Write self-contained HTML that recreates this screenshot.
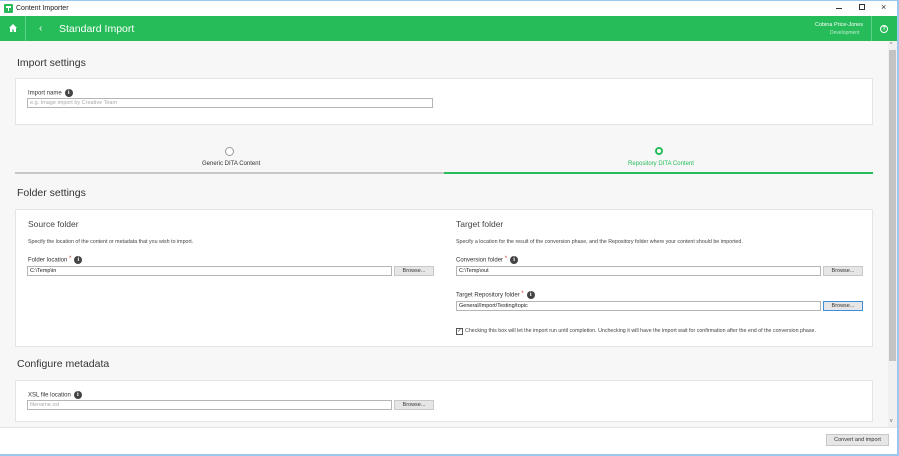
<!DOCTYPE html>
<html><head><meta charset="utf-8"><style>
*{box-sizing:border-box;margin:0;padding:0}
body{width:899px;height:456px;overflow:hidden;font-family:"Liberation Sans",sans-serif;background:#f7f7f7;position:relative}
.a{position:absolute}
.t{position:absolute;white-space:nowrap;color:#333}
.panel{position:absolute;background:#fff;border:1px solid #e4e4e4;left:15px;width:858px}
.inp{position:absolute;height:10px;border:1px solid #b5b5b5;background:#fff;font-size:5.5px;line-height:8px;padding-left:2px;color:#222}
.br{position:absolute;height:10px;width:40px;border:1px solid #c8c8c8;background:#e6e6e6;font-size:5.5px;line-height:8px;text-align:center;color:#333}
.lbl{font-size:6px;color:#333}
.i{display:inline-block;width:8px;height:8px;border-radius:50%;background:#444;color:#fff;font-size:6px;line-height:8px;text-align:center;font-weight:bold;vertical-align:middle;margin-left:3px;font-family:"Liberation Serif",serif}
.req{color:#d33;font-size:6px;vertical-align:top}
.h{font-size:10.5px;color:#333}
.sh{font-size:8.5px;color:#444}
.d{font-size:5.3px;color:#444}
</style></head><body>
<div class="a" style="left:0;top:0;width:899px;height:16px;background:#fff;border-top:1px solid #9cc8ee"></div>
<div class="a" style="left:4px;top:4px;width:9px;height:9px;background:#27b95a;border-radius:1px"></div>
<div class="a" style="left:6px;top:6px;width:5px;height:2px;background:#fff"></div>
<div class="a" style="left:8px;top:6px;width:1px;height:5px;background:#fff"></div>
<div class="t" style="left:16px;top:5px;font-size:7px;color:#222">Content Importer</div>
<div class="a" style="left:836px;top:8px;width:6px;height:1px;background:#333"></div>
<div class="a" style="left:859px;top:4px;width:6px;height:6px;border:1px solid #333"></div>
<div class="t" style="left:881px;top:2px;font-size:9px;color:#333">×</div>
<div class="a" style="left:0;top:16px;width:897px;height:25px;background:#26bc59"></div>
<div class="a" style="left:25px;top:16px;width:1px;height:25px;background:#5fd08a"></div>
<div class="a" style="left:871px;top:16px;width:1px;height:25px;background:#5fd08a"></div>
<svg class="a" style="left:9px;top:24px" width="8" height="8" viewBox="0 0 8 8"><path d="M4 0L0 4h1v4h2.3V5.5h1.4V8H7V4h1z" fill="#fff"/></svg>
<div class="t" style="left:39px;top:23px;font-size:10px;color:#fff">‹</div>
<div class="t" style="left:59px;top:23px;font-size:10.5px;color:#fff">Standard Import</div>
<div class="t" style="left:815px;top:22px;font-size:5.5px;color:#fff">Cobina Price-Jones</div>
<div class="t" style="left:830px;top:30px;font-size:5px;color:#bfeccf">Development</div>
<div class="a" style="left:880px;top:25px;width:8px;height:8px;border:1px solid #fff;border-radius:50%;color:#fff;font-size:5.5px;line-height:6px;text-align:center;font-weight:bold">?</div>
<div class="a" style="left:888px;top:41px;width:9px;height:386px;background:#f0f0f0"></div>
<div class="a" style="left:889px;top:50px;width:7px;height:311px;background:#c3c3c3"></div>
<div class="t" style="left:890px;top:42px;font-size:5px;color:#555">^</div>
<div class="t" style="left:890px;top:418px;font-size:5px;color:#555">v</div>
<div class="a" style="left:897px;top:0;width:2px;height:456px;background:#9cc8ee"></div>

<div class="t h" style="left:17px;top:57px">Import settings</div>
<div class="panel" style="top:78px;height:47px"></div>
<div class="t lbl" style="left:28px;top:89px">Import name<span class="i">i</span></div>
<div class="inp" style="left:27px;top:98px;width:406px;color:#aaa">e.g. Image import by Creative Team</div>

<div class="a" style="left:225px;top:147px;width:9px;height:9px;border:1px solid #999;border-radius:50%;background:#fff"></div>
<div class="t" style="left:202px;top:161px;font-size:6px;color:#333">Generic DITA Content</div>
<div class="a" style="left:655px;top:147px;width:8px;height:8px;border:2px solid #26bc59;border-radius:50%;background:#fff"></div>
<div class="t" style="left:628px;top:161px;font-size:6px;color:#26bc59">Repository DITA Content</div>
<div class="a" style="left:15px;top:172px;width:429px;height:2px;background:#c8c8c8"></div>
<div class="a" style="left:444px;top:172px;width:429px;height:2px;background:#26bc59"></div>

<div class="t h" style="left:17px;top:187px">Folder settings</div>
<div class="panel" style="top:209px;height:138px"></div>
<div class="t sh" style="left:28px;top:219px">Source folder</div>
<div class="t d" style="left:28px;top:239px">Specify the location of the content or metadata that you wish to import.</div>
<div class="t lbl" style="left:28px;top:256px">Folder location <span class="req">*</span><span class="i">i</span></div>
<div class="inp" style="left:27px;top:266px;width:365px">C:\Temp\in</div>
<div class="br" style="left:394px;top:266px">Browse...</div>

<div class="t sh" style="left:456px;top:219px">Target folder</div>
<div class="t d" style="left:456px;top:239px">Specify a location for the result of the conversion phase, and the Repository folder where your content should be imported.</div>
<div class="t lbl" style="left:456px;top:256px">Conversion folder <span class="req">*</span><span class="i">i</span></div>
<div class="inp" style="left:456px;top:266px;width:365px">C:\Temp\out</div>
<div class="br" style="left:823px;top:266px">Browse...</div>
<div class="t lbl" style="left:456px;top:291px">Target Repository folder <span class="req">*</span><span class="i">i</span></div>
<div class="inp" style="left:456px;top:301px;width:365px">General/Import/Testing/topic</div>
<div class="br" style="left:823px;top:301px;border-color:#3c8fd8">Browse...</div>
<div class="a" style="left:456px;top:328px;width:7px;height:7px;border:1px solid #555;background:#fff;font-size:5px;line-height:5px;text-align:center">✓</div>
<div class="t d" style="left:465px;top:328px">Checking this box will let the import run until completion. Unchecking it will have the import wait for confirmation after the end of the conversion phase.</div>

<div class="t h" style="left:17px;top:358px">Configure metadata</div>
<div class="panel" style="top:380px;height:42px"></div>
<div class="t lbl" style="left:28px;top:391px">XSL file location<span class="i">i</span></div>
<div class="inp" style="left:27px;top:400px;width:365px;color:#aaa">filename.xsl</div>
<div class="br" style="left:394px;top:400px">Browse...</div>

<div class="a" style="left:0;top:427px;width:897px;height:27px;background:#fff;border-top:1px solid #e4e4e4"></div>
<div class="br" style="left:826px;top:434px;width:63px;height:12px;line-height:10px">Convert and import</div>
<div class="a" style="left:0;top:454px;width:899px;height:2px;background:#9cc8ee"></div>
</body></html>
